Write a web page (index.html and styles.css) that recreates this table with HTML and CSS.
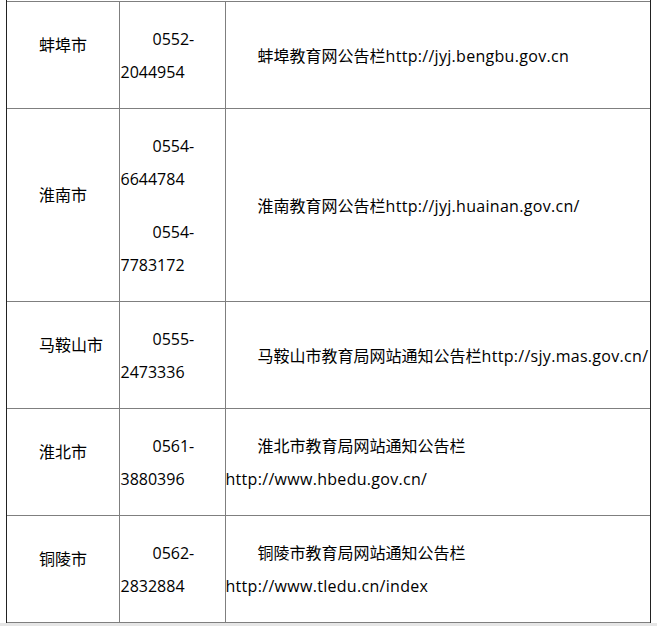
FILE: index.html
```html
<!DOCTYPE html>
<html>
<head>
<meta charset="utf-8">
<link rel="stylesheet" href="styles.css">
</head>
<body>
<div class="frame">
<table class="list">
<colgroup><col class="c1"><col class="c2"><col class="c3"></colgroup>
<tr>
<td class="city"><p>蚌埠市</p></td>
<td class="tel"><p>0552-2044954</p></td>
<td class="site"><p>蚌埠教育网公告栏<span class="url">http://jyj.bengbu.gov.cn</span></p></td>
</tr>
<tr>
<td class="city"><p>淮南市</p></td>
<td class="tel"><p>0554-6644784</p><p>0554-7783172</p></td>
<td class="site"><p>淮南教育网公告栏<span class="url">http://jyj.huainan.gov.cn/</span></p></td>
</tr>
<tr>
<td class="city"><p>马鞍山市</p></td>
<td class="tel"><p>0555-2473336</p></td>
<td class="site"><p>马鞍山市教育局网站通知公告栏<span class="url">http://sjy.mas.gov.cn/</span></p></td>
</tr>
<tr>
<td class="city"><p>淮北市</p></td>
<td class="tel"><p>0561-3880396</p></td>
<td class="site"><p>淮北市教育局网站通知公告栏<span class="url">http://www.hbedu.gov.cn/</span></p></td>
</tr>
<tr>
<td class="city"><p>铜陵市</p></td>
<td class="tel"><p>0562-2832884</p></td>
<td class="site"><p>铜陵市教育局网站通知公告栏<span class="url">http://www.tledu.cn/index</span></p></td>
</tr>
</table>
</div>
<div class="strip"></div>
</body>
</html>
```
FILE: styles.css
```css
html, body {
  margin: 0;
  padding: 0;
  background: #fff;
  height: 626px;
  overflow: hidden;
}
body {
  font-family: "Open Sans", "Noto Sans CJK SC", sans-serif;
  font-size: 16px;
  color: #000;
}
.frame {
  margin-left: 6px;
  width: 643px;
  padding-top: 1px;
  border-left: 1px solid #222;
  border-right: 1px solid #222;
}
.list {
  table-layout: fixed;
  border-collapse: collapse;
  width: 643px;
}
.c1 { width: 112px; }
.c2 { width: 106px; }
.c3 { width: 425px; }
.list td {
  padding: 21px 0 19px;
  vertical-align: middle;
  border-top: 1px solid #7f7f7f;
  border-bottom: 1px solid #7f7f7f;
  border-right: 1px solid #7f7f7f;
  line-height: 33px;
}
.list td.site { border-right: none; }
.list td.city { padding: 20px 0 40px; }
.list p {
  margin: 0;
  text-indent: 2em;
}
.list td.tel p { padding-left: 1px; }
.list p + p { margin-top: 20px; }
.url { letter-spacing: 0.3px; }
.strip {
  height: 3px;
  background: #e6e6e6;
}
```
